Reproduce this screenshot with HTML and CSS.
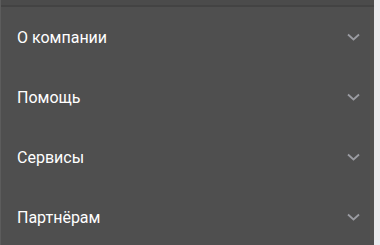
FILE: index.html
```html
<!DOCTYPE html>
<html lang="ru">
<head>
<meta charset="utf-8">
<link rel="stylesheet" href="styles.css">
</head>
<body>
<nav class="panel">
  <div class="top"></div>
  <ul class="menu">
    <li class="item"><span class="label">О компании</span><svg class="chev" viewBox="0 0 13 8" width="13" height="8"><path d="M1 1.5 L6.5 6.5 L12 1.5" fill="none" stroke="#9b9ca2" stroke-width="1.8"/></svg></li>
    <li class="item"><span class="label">Помощь</span><svg class="chev" viewBox="0 0 13 8" width="13" height="8"><path d="M1 1.5 L6.5 6.5 L12 1.5" fill="none" stroke="#9b9ca2" stroke-width="1.8"/></svg></li>
    <li class="item"><span class="label">Сервисы</span><svg class="chev" viewBox="0 0 13 8" width="13" height="8"><path d="M1 1.5 L6.5 6.5 L12 1.5" fill="none" stroke="#9b9ca2" stroke-width="1.8"/></svg></li>
    <li class="item"><span class="label">Партнёрам</span><svg class="chev" viewBox="0 0 13 8" width="13" height="8"><path d="M1 1.5 L6.5 6.5 L12 1.5" fill="none" stroke="#9b9ca2" stroke-width="1.8"/></svg></li>
  </ul>
</nav>
</body>
</html>
```
FILE: styles.css
```css
html, body {
  margin: 0;
  padding: 0;
  background: #ebebef;
  height: 100%;
}
.panel {
  width: 373px;
  height: 100%;
  background: #4f4f4f;
  border-left: 1px solid #5c5c5c;
  font-family: Roboto, "Liberation Sans", sans-serif;
  overflow: hidden;
}
.top {
  height: 5px;
  background: #4b4b4b;
  border-bottom: 2px solid #434343;
}
.menu {
  list-style: none;
  margin: 0;
  padding: 0;
}
.item {
  height: 60px;
  display: flex;
  align-items: center;
  justify-content: space-between;
  padding: 0 14px 0 16px;
}
.label {
  color: #ffffff;
  font-size: 16px;
}
.chev {
  display: block;
}
```
